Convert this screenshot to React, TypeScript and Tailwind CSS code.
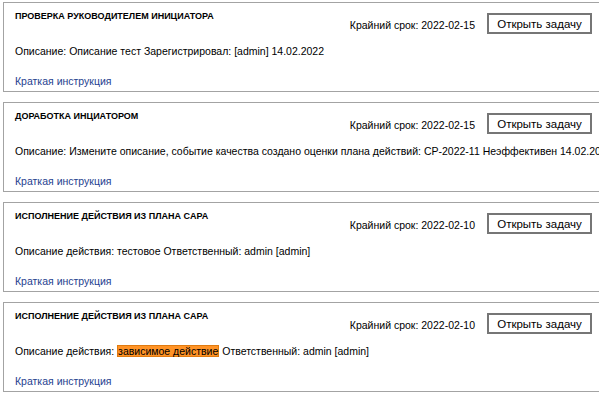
import type { ReactNode } from "react";

type Task = {
  title: string;
  deadline: string;
  description: ReactNode;
};

const tasks: Task[] = [
  {
    title: "ПРОВЕРКА РУКОВОДИТЕЛЕМ ИНИЦИАТОРА",
    deadline: "2022-02-15",
    description: "Описание: Описание тест Зарегистрировал: [admin] 14.02.2022",
  },
  {
    title: "ДОРАБОТКА ИНЦИАТОРОМ",
    deadline: "2022-02-15",
    description:
      "Описание: Измените описание, событие качества создано оценки плана действий: CP-2022-11 Неэффективен 14.02.2022",
  },
  {
    title: "ИСПОЛНЕНИЕ ДЕЙСТВИЯ ИЗ ПЛАНА CAPA",
    deadline: "2022-02-10",
    description: "Описание действия: тестовое Ответственный: admin [admin]",
  },
  {
    title: "ИСПОЛНЕНИЕ ДЕЙСТВИЯ ИЗ ПЛАНА CAPA",
    deadline: "2022-02-10",
    description: (
      <>
        Описание действия:{" "}
        <span className="bg-[#ff9326] px-[1px] shadow-[inset_0_0_0_1px_#e07b10]">
          зависимое действие
        </span>{" "}
        Ответственный: admin [admin]
      </>
    ),
  },
];

function TaskCard({ task }: { task: Task }) {
  return (
    <div className="h-[90px] w-[597px] overflow-hidden border border-[#a3a3a3] bg-white pl-[11px] pr-[7px]">
      <div className="flex h-[31px] items-start justify-between">
        <div className="mt-[8px] text-[9px] font-bold leading-[11px] text-black">
          {task.title}
        </div>
        <div className="mt-[10px] flex items-start">
          <span className="mt-[5px] text-[10.5px] leading-[14px] text-black">
            Крайний срок: {task.deadline}
          </span>
          <button
            type="button"
            className="ml-[12px] h-[21px] w-[105px] border-2 border-[#767676] bg-white text-[11.5px] leading-[16px] text-black"
          >
            Открыть задачу
          </button>
        </div>
      </div>
      <div className="mt-[10px] whitespace-nowrap text-[10.5px] leading-[14px] text-black">
        {task.description}
      </div>
      <div className="mt-[16px] text-[10.5px] leading-[14px] text-[#1f3f8f]">
        Краткая инструкция
      </div>
    </div>
  );
}

export default function App() {
  return (
    <div
      className="h-[398px] w-[599px] overflow-hidden bg-white pl-[3px] pt-[2px]"
      style={{ fontFamily: '"Liberation Sans", Arial, sans-serif' }}
    >
      <div className="flex flex-col gap-[10px]">
        {tasks.map((task, index) => (
          <TaskCard key={index} task={task} />
        ))}
      </div>
    </div>
  );
}
